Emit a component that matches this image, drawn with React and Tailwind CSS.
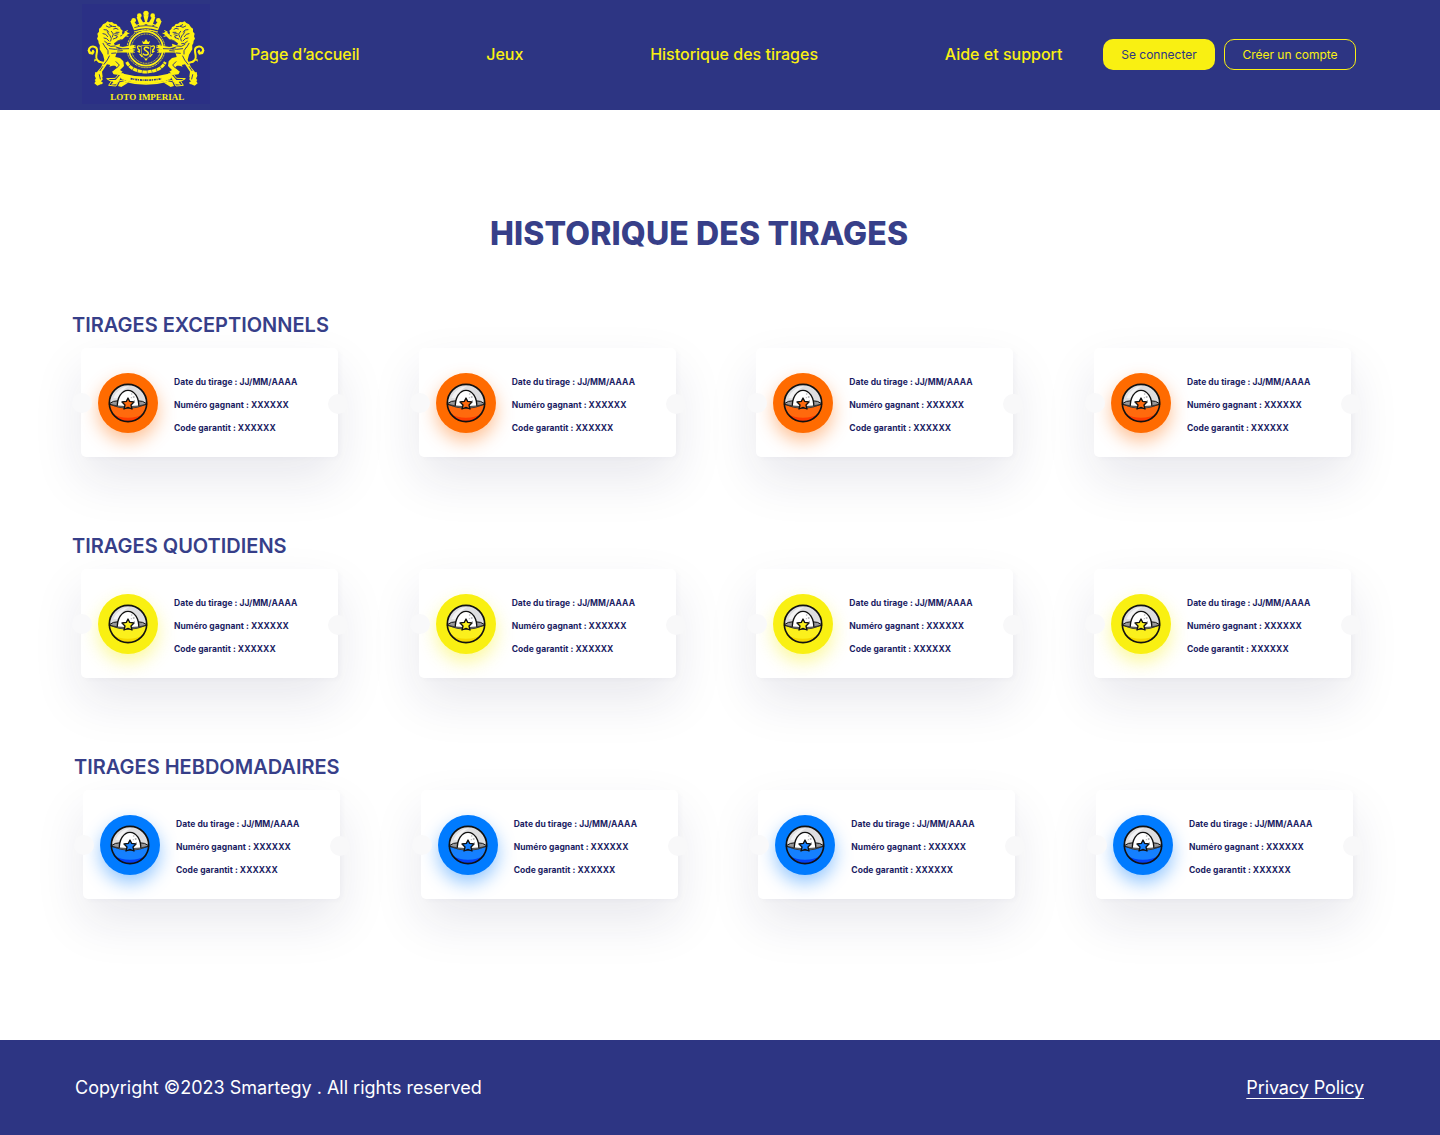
const navItems = ["Page d’accueil", "Jeux", "Historique des tirages", "Aide et support"];

const sections = [
  { title: "TIRAGES EXCEPTIONNELS", kind: "orange", offset: "" },
  { title: "TIRAGES QUOTIDIENS", kind: "yellow", offset: "" },
  { title: "TIRAGES HEBDOMADAIRES", kind: "blue", offset: "ml-[2px]" },
];

const themes = {
  orange: { disc: "bg-[#ff6b00] shadow-[0_8px_18px_rgba(255,107,0,0.42)]", main: "#ff6a0d", deep: "#ff3d00" },
  yellow: { disc: "bg-[#f9f012] shadow-[0_8px_18px_rgba(249,240,18,0.42)]", main: "#fbf01c", deep: "#f5d800" },
  blue: { disc: "bg-[#007bff] shadow-[0_8px_18px_rgba(0,123,255,0.42)]", main: "#1580ff", deep: "#0040f5" },
};

function Lion() {
  return (
    <g>
      {/* mane and head */}
      <path
        fill="#fff212"
        d="M101 73l8-4 5-5 7 3 7-1 6 5 7 1 4 6 7 3 2 6 6 5-2 6 2 6-6 2-2 6-8 2-5 5 1 6-6 5 3 7-8 4-7 8-12 4-12-6-5-10-5-7-1-8-4-6 3-7-2-8 5-6 0-9 6-4z"
      />
      {/* torso */}
      <path fill="#fff212" d="M92 118l14 14 24 7 22-8-2 14-8 12-4 14 14 3 10 10 2 14-12 12 8 5-9 8-18-1-4-7 16-10-4-7-18-3-10-2-8 12-7 10 2 15-8 11 4 11-12 5-9-7 6-9-4-13 6-12 12-14 10-22-4-16-10-16z" />
      {/* forelegs */}
      <path fill="none" stroke="#fff212" strokeWidth="10" strokeLinecap="round" strokeLinejoin="round" d="M126 139l34 7 30-5M124 155l28-3 36 1M136 122l22-9 13-13" />
      <path fill="none" stroke="#fff212" strokeWidth="3" strokeLinecap="round" d="M190 136l8 2M190 142l8 1M188 149l8 1M188 155l7 2M166 96l8-4M170 101l9-1M168 107l8 2" />
      {/* tail */}
      <path fill="none" stroke="#fff212" strokeWidth="6" strokeLinecap="round" d="M101 188c-16-2-22-11-20-22 2-10 6-24-7-26-12-2-19 9-13 16 5 5 12 1 10-4" />
      <path fill="#fff212" d="M54 150l5 12 12 2 6-10-5 1-5 3-7-5zM76 176l-2 9 7-4 8 8 7-4z" />
      {/* rear leg and paws */}
      <path fill="#fff212" d="M130 179l20 4 10 18-15 13 9 5-3 6-18-2-4-8 14-12-7-8-16 5z" />
      <path fill="#fff212" d="M78 216l18 4 4 19-5 5 6 4-3 5-14-3-8-10 6-6-6-6z" />
      {/* engraved detail */}
      <g fill="none" stroke="#2d3283" strokeWidth="2.8" strokeLinecap="round">
        <path d="M111 78l8 4 8-3M104 89l9 1 5 6M101 101l8 2 6 7M104 114l8 2 7 7M120 74l9 5 10 1" />
        <path d="M133 87l7-2 6 3M126 94l6 8-3 9M140 97l9 0M136 106l8 2-2 5M121 105l5 10-2 8M114 95l4 8" />
        <path d="M113 133l11 6 13-1M120 146l18 2 13-2M127 160l12-1M109 142l7 10 0 10M120 168l-6 12-10 13M100 200l-8 12M140 185l10 10-8 9M90 224l3 13M101 130l7 12" />
        <path d="M140 141l16 5M145 153l14-1M143 124l12-5M148 147l30-1" />
        <path d="M136 101l10 1M132 117l10-4M106 124l8 6 9 1" />
      </g>
      {/* ribbon end */}
      <path fill="none" stroke="#fff212" strokeWidth="3" strokeLinejoin="round" d="M112 236l26-1 10-12 14-2 7 10 5 17-13-8-13 3-8 15-22-2 8-12z" />
      <path fill="#fff212" d="M117 240l22 0 12-14 8-2-8 15-10 14-16 1 7-8zM164 244l10 6-18 11-10-3 5-11z" />
    </g>
  );
}

function Crest() {
  const dots = [[193, 61], [210, 47], [230, 40], [250, 47], [267, 61]];
  return (
    <svg width="128" height="100" viewBox="36 12 384 300" aria-label="Loto Imperial">
      <rect x="36" y="12" width="384" height="300" fill="#2b3085" />
      <g transform="translate(-2 0)">
        <circle cx="230" cy="146" r="51" fill="none" stroke="#fff212" strokeWidth="5" />
        <circle cx="230" cy="146" r="44" fill="none" stroke="#fff212" strokeWidth="3" strokeDasharray="3 2" />
        <circle cx="230" cy="146" r="57" fill="none" stroke="#fff212" strokeWidth="2.4" strokeDasharray="7 2" />
        <Lion />
        <g transform="translate(460 0) scale(-1 1)">
          <Lion />
        </g>
        {/* crown */}
        <path fill="#fff212" d="M194 91l-11-27 7-4 12 14 7-3-7-19 8-4 11 19 6-1-5-20 16 0-5 20 6 1 11-19 8 4-7 19 7 3 12-14 7 4-11 27q-36-12-72 0z" />
        {dots.map(([x, y]) => (
          <circle key={x} cx={x} cy={y} r={x === 230 ? 8 : 7} fill="#fff212" />
        ))}
        <path fill="none" stroke="#2b3085" strokeWidth="2.5" d="M195 83q35-12 70 0M205 77l5-1M226 74h8M249 76l6 1" />
        <path fill="none" stroke="#fff212" strokeWidth="3" d="M194 96q36-12 72 0" />
        {/* shield */}
        <path fill="none" stroke="#fff212" strokeWidth="2" d="M216 137h28v22q-1 12-14 19-13-7-14-19z" />
        <path fill="none" stroke="#fff212" strokeWidth="4.5" strokeLinecap="round" d="M238 144c-6-5-15-2-13 4 2 5 12 5 12 12 0 6-10 7-15 2" />
        <path fill="none" stroke="#fff212" strokeWidth="4" strokeLinecap="round" d="M213 139q-12-4-7 7 6 4 4 10l-4-2M212 163l6 7M247 139q12-4 7 7-6 4-4 10l4-2M248 163l-6 7" />
        <path fill="#fff212" d="M221 132l-3-9 6 3 6-9 6 9 6-3-3 9zM225 176h10l-5 7z" />
        {/* laurel */}
        <path fill="none" stroke="#fff212" strokeWidth="9" strokeDasharray="13 1.5" d="M172 186q14 28 58 30 44-2 58-30" />
        {/* motto ribbon */}
        <path fill="#fff212" d="M151 219q79 21 158 0l-5 18q-74 28-148 0z" />
        <path fill="none" stroke="#2b3085" strokeWidth="5" strokeDasharray="6 2 3 3" d="M184 236q46 9 92 0" />
        <path fill="none" stroke="#fff212" strokeWidth="4" d="M164 243q66 18 132 0" />
      </g>
      <text x="121" y="301" fill="#fff212" fontFamily="Liberation Serif, serif" fontWeight="700" fontSize="25" textLength="222" lengthAdjust="spacingAndGlyphs">
        LOTO IMPERIAL
      </text>
    </svg>
  );
}

function Capsule({ main, deep }) {
  return (
    <svg width="40" height="40" viewBox="0 0 120 120" aria-hidden="true">
      <circle cx="60" cy="60" r="56" fill="#dedee0" />
      <path d="M16 44Q30 12 64 9q-26 12-30 38z" fill="#f2f2f3" />
      {/* rim */}
      <path d="M4 62Q14 53 33 53v22L4 66zM116 62Q106 53 87 53v22l29-9z" fill="#98989b" stroke="#111" strokeWidth="3" />
      {/* egg */}
      <path d="M28 76C26 43 42 22 60 22s35 21 32 54z" fill="#fff" stroke="#111" strokeWidth="4" />
      <g fill="#b4b4b7">
        <circle cx="71" cy="33" r="2.5" />
        <circle cx="77" cy="42" r="3" />
        <circle cx="70" cy="44" r="2" />
        <circle cx="79" cy="53" r="2" />
      </g>
      {/* lower shell */}
      <path d="M4 64Q60 88 116 64 113 116 60 116T4 64z" fill={main} />
      <path d="M14 92q18 12 46 12t46-12Q94 116 60 116T14 92z" fill={deep} />
      <path d="M5 64q55 14 110 0Q60 88 5 64z" fill="#98989b" stroke="#111" strokeWidth="2" />
      <path d="M60 45l5 10 13 2-9 9 3 12-12-5-12 5 3-12-9-9 13-2z" fill={main} stroke="#111" strokeWidth="4" strokeLinejoin="round" />
      <circle cx="60" cy="60" r="56" fill="none" stroke="#111" strokeWidth="5" />
    </svg>
  );
}

function DrawCard({ kind }) {
  const t = themes[kind];
  return (
    <article className="relative flex h-[109px] w-[257px] shrink-0 rounded-[5px] bg-white pl-[17px] shadow-[0_22px_50px_rgba(25,25,80,0.1),3px_2px_5px_rgba(25,25,80,0.025)]">
      <span className="absolute -left-[9px] top-[45px] size-5 rounded-full bg-[#f9f9fa]" />
      <span className="absolute -right-[10px] top-[46px] size-5 rounded-full bg-[#f8f8f9]" />
      <div className={`mt-[25px] flex size-[60px] items-center justify-center rounded-full ${t.disc}`}>
        <Capsule main={t.main} deep={t.deep} />
      </div>
      <div className="ml-4 mt-[23px] whitespace-nowrap text-[8.5px] font-bold leading-[23px] tracking-[0.04px] text-[#1b1d63]">
        <p>Date du tirage : JJ/MM/AAAA</p>
        <p>Numéro gagnant : XXXXXX</p>
        <p>Code garantit : XXXXXX</p>
      </div>
    </article>
  );
}

export default function App() {
  return (
    <div className="flex h-[1135px] w-[1440px] flex-col overflow-hidden bg-white font-['Inter',sans-serif]">
      <header className="flex h-[110px] shrink-0 bg-[#2d3583] pl-[82px]">
        <div className="mt-1 w-[128px]">
          <Crest />
        </div>
        <nav className="ml-10 flex h-[107px] w-[812.5px] items-center justify-between whitespace-nowrap text-[16px] font-medium text-[#f9f012]">
          {navItems.map((item) => (
            <a key={item} className={item === navItems[0] ? "tracking-[-0.1px]" : ""}>{item}</a>
          ))}
        </nav>
        <div className="ml-[40.5px] mt-[38.5px] flex gap-[9px] text-[12px]">
          <button className="h-[31px] w-[112px] rounded-[10px] bg-[#f9f012] pt-px text-[#2d3583]">Se connecter</button>
          <button className="h-[31px] w-[132px] rounded-[10px] border border-[#f9f012] pt-px text-[#f9f012]">Créer un compte</button>
        </div>
      </header>

      <main className="h-[930px] shrink-0 pl-[73px]">
        <h1 className="ml-[417px] whitespace-nowrap pt-[104px] text-[32px] font-extrabold leading-10 tracking-[0.13px] text-[#373f89]">HISTORIQUE DES TIRAGES</h1>
        <div className="mt-[56px]">
          {sections.map((s) => (
            <section key={s.title} className={`h-[221px] ${s.offset}`}>
              <h2 className="-ml-px h-[38px] whitespace-nowrap pt-px text-[20px] font-semibold leading-7 text-[#373f89]">{s.title}</h2>
              <div className="ml-2 flex gap-[80.67px]">
                {[0, 1, 2, 3].map((i) => (
                  <DrawCard key={i} kind={s.kind} />
                ))}
              </div>
            </section>
          ))}
        </div>
      </main>

      <footer className="flex h-[95px] shrink-0 items-center justify-between bg-[#2d3583] pl-[75px] pr-[76px] text-[18px] text-white">
        <p>Copyright ©2023 Smartegy . All rights reserved</p>
        <a className="tracking-[-0.1px] underline underline-offset-4">Privacy Policy</a>
      </footer>
    </div>
  );
}
